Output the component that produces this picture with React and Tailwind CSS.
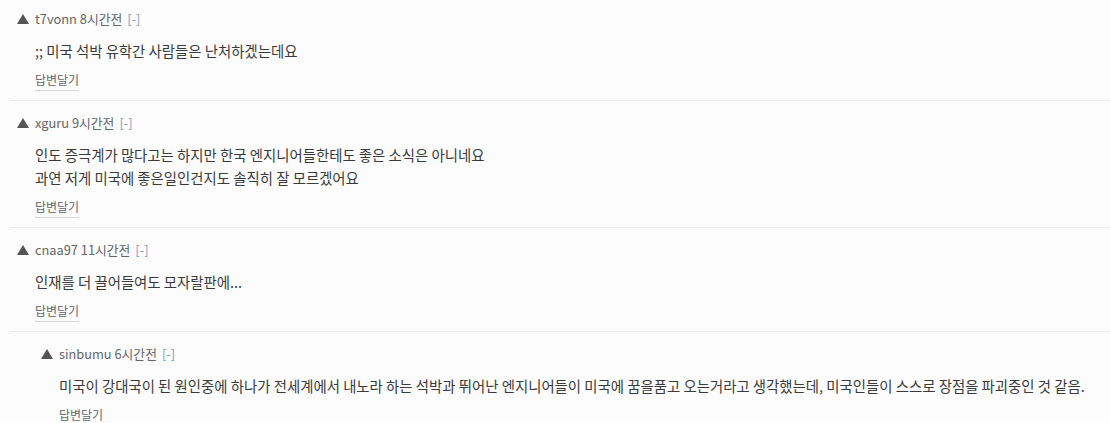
import React from 'react';

const comments = [
  { user: 't7vonn', time: '8시간전', lines: [';; 미국 석박 유학간 사람들은 난처하겠는데요'], depth: 0, first: true },
  {
    user: 'xguru',
    time: '9시간전',
    lines: ['인도 증극계가 많다고는 하지만 한국 엔지니어들한테도 좋은 소식은 아니네요', '과연 저게 미국에 좋은일인건지도 솔직히 잘 모르겠어요'],
    depth: 0,
  },
  { user: 'cnaa97', time: '11시간전', lines: ['인재를 더 끌어들여도 모자랄판에...'], depth: 0 },
  {
    user: 'sinbumu',
    time: '6시간전',
    lines: ['미국이 강대국이 된 원인중에 하나가 전세계에서 내노라 하는 석박과 뛰어난 엔지니어들이 미국에 꿈을품고 오는거라고 생각했는데, 미국인들이 스스로 장점을 파괴중인 것 같음.'],
    depth: 1,
  },
];

const Vote = () => (
  <svg width="12" height="10" viewBox="0 0 12 10" className="mr-[6px]">
    <polygon points="6,0 12,10 0,10" fill="#555" />
  </svg>
);

const Comment = ({ c }) => (
  <div className={`${c.depth ? 'pl-[24px]' : ''} ${c.first ? 'pt-[10px]' : 'pt-[13px]'} pb-[9px] ml-[10px] border-b border-[#ececec]`}>
    <div className="flex items-center h-[18px] pl-[7px] text-[12.8px] text-[#666]">
      <Vote />
      <span>{c.user} {c.time}</span>
      <span className="ml-[5px] text-[#7a9cc6]">[-]</span>
    </div>
    <div className="pl-[25px] mt-[11px] text-[14.4px] leading-[23px] text-[#3a3a3a]">
      {c.lines.map((l, i) => (
        <div key={i}>{l}</div>
      ))}
    </div>
    <div className="pl-[25px] mt-[8px] text-[12px] text-[#666]">
      <span className="border-b border-[#d4d4d4] leading-[20px] inline-block">답변달기</span>
    </div>
  </div>
);

export default function App() {
  return (
    <div
      className="w-[1110px] h-[423px] overflow-hidden bg-[#fcfcfc]"
      style={{ fontFamily: '"Noto Sans CJK KR", "Noto Sans", sans-serif' }}
    >
      {comments.map((c, i) => (
        <Comment key={i} c={c} />
      ))}
    </div>
  );
}
